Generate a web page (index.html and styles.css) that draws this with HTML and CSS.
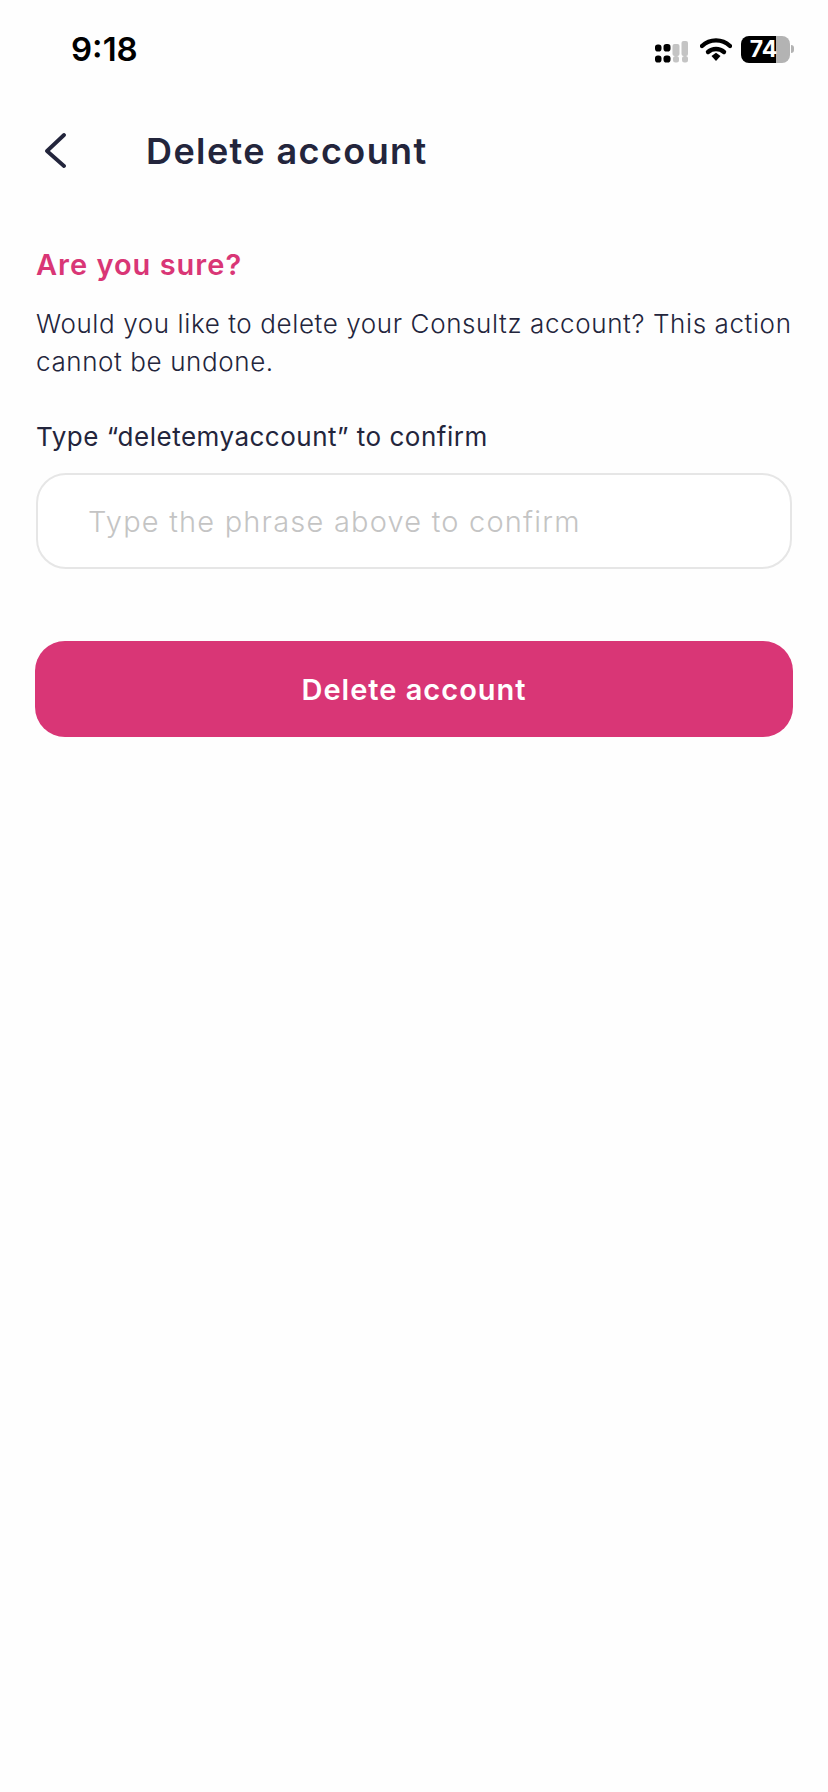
FILE: index.html
```html
<!DOCTYPE html>
<html>
<head>
    <title>Delete account</title>
    <link rel="stylesheet" href="styles.css">
</head>
<body>
    <div class="status-bar">
        <span class="time">9:18</span>
        <div class="status-icons">
            <svg class="signal" width="33" height="27" viewBox="0 0 33 27">
                <rect x="0" y="8.500" width="6.500" height="7" rx="2.800" fill="#000"/>
                <rect x="8.500" y="8" width="7" height="7.500" rx="2.800" fill="#000"/>
                <rect x="0" y="19.500" width="6.500" height="7" rx="2.800" fill="#000"/>
                <rect x="8.500" y="19.500" width="7" height="7" rx="2.800" fill="#000"/>
                <rect x="17.500" y="8" width="7" height="12" rx="2" fill="#c4c4c4"/>
                <rect x="26.500" y="5" width="6.500" height="15" rx="2" fill="#c4c4c4"/>
                <rect x="18" y="20" width="6" height="6.500" rx="2.500" fill="#c4c4c4"/>
                <rect x="27" y="20" width="6" height="6.500" rx="2.500" fill="#c4c4c4"/>
            </svg>
            <svg class="wifi" width="32" height="24" viewBox="0 0 32 24">
                <path d="M2 9 C10 1.500 22 1.500 30 9" fill="none" stroke="#000" stroke-width="4.400" stroke-linecap="round"/>
                <path d="M8 15 C12.500 11 19.500 11 24 15" fill="none" stroke="#000" stroke-width="4.400" stroke-linecap="round"/>
                <path d="M11.500 19 L16 15.800 L20.500 19 L16 24 Z" fill="#000"/>
            </svg>
            <div class="battery">
                <div class="battery-body">74</div>
                <div class="battery-nub"></div>
            </div>
        </div>
    </div>

    <div class="header">
        <svg class="back" width="22" height="36" viewBox="0 0 22 36">
            <path d="M20 2 L3 18 L20 33" fill="none" stroke="#23253c" stroke-width="3.800" stroke-linecap="round" stroke-linejoin="round"/>
        </svg>
        <h1>Delete account</h1>
    </div>

    <div class="content">
        <h2>Are you sure?</h2>
        <p class="message">Would you like to delete your Consultz account? This action cannot be undone.</p>
        <label for="confirmBox">Type “deletemyaccount” to confirm</label>
        <input type="text" id="confirmBox" placeholder="Type the phrase above to confirm">
        <button>Delete account</button>
    </div>
</body>
</html>
```

FILE: styles.css
```css
html, body {
    height: 100%;
}
body {
    margin: 0;
    background-color: #fefefe;
    color: #23253c;
    font-family: "Inter", "Lato", sans-serif;
    overflow: hidden;
}
.status-bar {
    display: flex;
    justify-content: space-between;
    align-items: center;
    height: 80px;
    padding: 18px 34px 0 71px;
    box-sizing: border-box;
}
.time {
    font-size: 33px;
    font-weight: 600;
    color: #000;
}
.status-icons {
    display: flex;
    align-items: center;
}
.signal {
    margin-right: 12px;
}
.wifi {
    margin-right: 9px;
}
.battery {
    display: flex;
    align-items: center;
    gap: 1px;
}
.battery-body {
    width: 49px;
    height: 27px;
    border-radius: 8px;
    background: linear-gradient(to right, #000 0, #000 35px, #b3b3b3 35px);
    color: #fff;
    font-size: 23px;
    font-weight: 700;
    line-height: 27px;
    text-align: center;
    padding-right: 4px;
    box-sizing: border-box;
}
.battery-nub {
    width: 3px;
    height: 8px;
    border-radius: 0 3px 3px 0;
    background-color: #b3b3b3;
}
.header {
    display: flex;
    align-items: center;
    gap: 80px;
    padding: 49px 0 0 44px;
}
.header h1 {
    margin: 0;
    font-size: 36px;
    font-weight: 600;
    line-height: 44px;
    letter-spacing: 1.4px;
}
.content {
    display: flex;
    flex-direction: column;
    padding: 73px 36px 0;
}
.content h2 {
    margin: 0;
    color: #d93676;
    font-size: 29px;
    font-weight: 600;
    line-height: 38px;
    letter-spacing: 1px;
}
.message {
    margin: 21px 0 0;
    font-size: 26px;
    font-weight: 300;
    line-height: 38px;
    letter-spacing: 0.6px;
}
label {
    margin-top: 37px;
    font-size: 26px;
    line-height: 38px;
    letter-spacing: 0.5px;
}
input[type="text"] {
    height: 96px;
    margin-top: 17px;
    padding: 0 50px;
    border: 2px solid #e6e6e6;
    border-radius: 30px;
    background-color: #fff;
    box-sizing: border-box;
    font-family: inherit;
    font-size: 29px;
    font-weight: 300;
    letter-spacing: 1.2px;
    outline: none;
}
input[type="text"]::placeholder {
    color: #c4c4c4;
    opacity: 1;
}
button {
    height: 96px;
    margin: 72px -1px 0;
    border: none;
    border-radius: 30px;
    background-color: #d93676;
    color: #fff;
    font-family: inherit;
    font-size: 29px;
    font-weight: 600;
    letter-spacing: 1px;
}
```
